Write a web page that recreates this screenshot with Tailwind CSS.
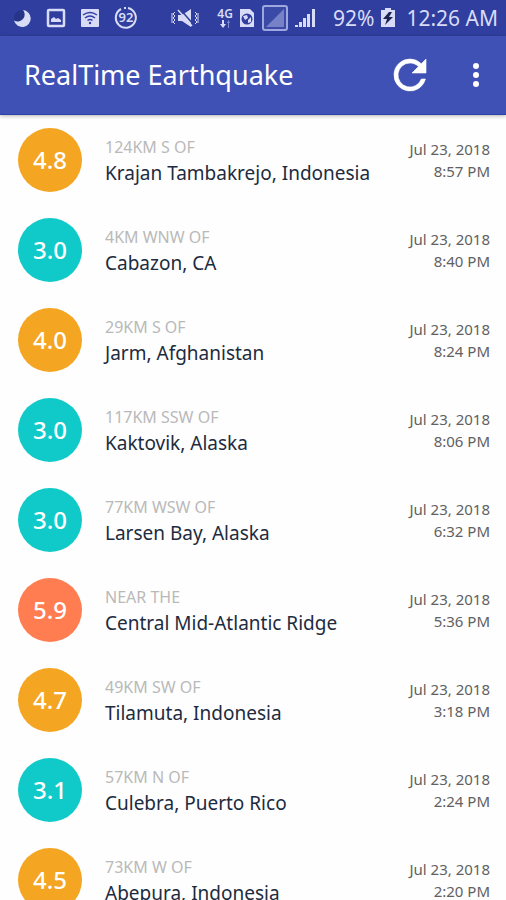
<!DOCTYPE html>
<html lang="en">
<head>
    <meta charset="UTF-8">
    <meta name="viewport" content="width=device-width, initial-scale=1.0">
    <title>RealTime Earthquake</title>
    <script src="https://cdn.jsdelivr.net/npm/@tailwindcss/browser@4"></script>
</head>
<body class="h-screen flex flex-col overflow-hidden bg-[#fefefe] font-['Noto_Sans','Open_Sans',sans-serif]">
    <!-- Status bar -->
    <div class="h-9 shrink-0 flex items-center justify-between bg-[#303f9f] pl-3 pr-2 text-[#d8dcf6]">
        <div class="flex items-center gap-3.5">
            <svg class="w-5 h-5" viewBox="0 0 20 20"><circle cx="10" cy="10" r="8" fill="#26348a"/><path d="M11 2a8.500 8.500 0 1 1-9 10.500A7 7 0 0 0 11 2z" fill="currentColor"/></svg>
            <svg class="w-5 h-5" viewBox="0 0 20 20"><rect x="2" y="2" width="16" height="16" rx="1" fill="none" stroke="currentColor" stroke-width="2.500"/><path d="M5 14v-3l3-2 2 2 2-1 3 2v2z" fill="currentColor"/></svg>
            <svg class="w-5 h-5" viewBox="0 0 20 20"><rect x="1" y="1" width="18" height="18" rx="1" fill="currentColor"/><g fill="none" stroke="#303f9f" stroke-width="1.500"><path d="M3 7q7-5 14 0M5 10q5-4 10 0M7.500 12.500q2.500-2 5 0"/></g><circle cx="10" cy="15" r="1.200" fill="#303f9f"/></svg>
            <div class="relative w-6 h-6 flex items-center justify-center text-[13px] font-semibold">
                <svg class="absolute inset-0 w-6 h-6" viewBox="0 0 24 24" fill="none" stroke="currentColor" stroke-width="2"><path d="M14 2a10 10 0 1 1-7 1M10 2h2"/></svg>
                92
            </div>
        </div>
        <div class="flex items-center gap-1.5">
            <svg class="w-7 h-5 mr-3" viewBox="0 0 28 20"><path d="M7 7h4l9-6v18l-9-6H7z" fill="currentColor"/><path d="M9 1l13 15" stroke="#303f9f" stroke-width="1.500"/><path d="M7 2l14 16" stroke="currentColor" stroke-width="1.500"/><path d="M4 4L2 6l2 2-2 2 2 2-2 2 2 2M1 5v10M24 4l2 2-2 2 2 2-2 2 2 2-2 2M27 5v10" fill="none" stroke="currentColor" stroke-width="1"/></svg>
            <div class="flex flex-col items-center text-xs leading-3 font-semibold">
                4G
                <svg class="w-3 h-2" viewBox="0 0 12 8"><path d="M3 0h2v4h2L4 8 1 4h2z" fill="currentColor"/><path d="M9 8V3H8l1.500-3L11 3h-1v5z" fill="#7f8bd0"/></svg>
            </div>
            <svg class="w-4 h-5" viewBox="0 0 16 20"><path d="M1 1h10l4 4v14H1z" fill="currentColor"/><circle cx="8" cy="11" r="5.500" fill="#303f9f"/><path d="M4 8l4-1 1 3-3 2zM9 12l3-3v5l-3 1z" fill="currentColor"/></svg>
            <svg class="w-7 h-7" viewBox="0 0 28 28"><rect x="2" y="2" width="24" height="24" rx="2" fill="#3b4aa6" stroke="#9fa8de" stroke-width="2"/><path d="M23 5v18H5z" fill="#7681c8"/></svg>
            <svg class="w-5 h-5" viewBox="0 0 20 20" fill="currentColor"><path d="M0 17h3v2H0zM4 14h3v5H4zM8 10h3v9H8zM12 6h3v13h-3zM17 1h3v18h-3z"/></svg>
            <span class="ml-3 text-[21px] leading-9">92%</span>
            <svg class="w-4 h-5" viewBox="0 0 16 20"><path d="M5 0h6v2h4v17H1V2h4z" fill="currentColor"/><path d="M9 4l-6 7h4l-2 6 8-8H9l3-5z" fill="#1c2450"/></svg>
            <span class="ml-1 text-[21px] leading-9">12:26 AM</span>
        </div>
    </div>

    <!-- App bar -->
    <header class="relative z-10 h-[79px] shrink-0 flex items-center bg-[#3f51b5] pl-6 pr-5 text-white border-b border-[#2c40a5] shadow-[0_1px_4px_rgba(0,0,0,0.3)]">
        <h1 class="flex-1 text-[27px] leading-8">RealTime Earthquake</h1>
        <button type="button" aria-label="Refresh" class="mr-8">
            <svg class="w-12 h-12" viewBox="0 0 24 24" fill="currentColor"><path d="M17.650 6.350A7.958 7.958 0 0 0 12 4a8 8 0 1 0 7.730 10h-2.080A6 6 0 1 1 12 6c1.660 0 3.140.69 4.220 1.780L13 11h7V4z" stroke="currentColor" stroke-width=".3"/></svg>
        </button>
        <button type="button" aria-label="More options">
            <svg class="w-5 h-6" viewBox="0 0 20 24" fill="currentColor"><circle cx="10" cy="3" r="3"/><circle cx="10" cy="12" r="3"/><circle cx="10" cy="21" r="3"/></svg>
        </button>
    </header>

    <!-- Earthquake list -->
    <ul class="flex-1 min-h-0 overflow-hidden">
        <li class="h-[90px] flex items-center pl-[18px] pr-4">
            <div class="w-16 h-16 shrink-0 rounded-full bg-[#f4a522] flex items-center justify-center text-2xl font-medium text-white">4.8</div>
            <div class="flex-1 pl-[23px] pt-0.5">
                <p class="text-base leading-6 text-[#b9b9b9]">124KM S OF</p>
                <p class="text-[19px] leading-7 text-[#1d2b3e]">Krajan Tambakrejo, Indonesia</p>
            </div>
            <div class="text-right text-[15px] leading-[22px] text-[#616161]">
                <p>Jul 23, 2018</p>
                <p>8:57 PM</p>
            </div>
        </li>
        <li class="h-[90px] flex items-center pl-[18px] pr-4">
            <div class="w-16 h-16 shrink-0 rounded-full bg-[#10cac9] flex items-center justify-center text-2xl font-medium text-white">3.0</div>
            <div class="flex-1 pl-[23px] pt-0.5">
                <p class="text-base leading-6 text-[#b9b9b9]">4KM WNW OF</p>
                <p class="text-[19px] leading-7 text-[#1d2b3e]">Cabazon, CA</p>
            </div>
            <div class="text-right text-[15px] leading-[22px] text-[#616161]">
                <p>Jul 23, 2018</p>
                <p>8:40 PM</p>
            </div>
        </li>
        <li class="h-[90px] flex items-center pl-[18px] pr-4">
            <div class="w-16 h-16 shrink-0 rounded-full bg-[#f4a522] flex items-center justify-center text-2xl font-medium text-white">4.0</div>
            <div class="flex-1 pl-[23px] pt-0.5">
                <p class="text-base leading-6 text-[#b9b9b9]">29KM S OF</p>
                <p class="text-[19px] leading-7 text-[#1d2b3e]">Jarm, Afghanistan</p>
            </div>
            <div class="text-right text-[15px] leading-[22px] text-[#616161]">
                <p>Jul 23, 2018</p>
                <p>8:24 PM</p>
            </div>
        </li>
        <li class="h-[90px] flex items-center pl-[18px] pr-4">
            <div class="w-16 h-16 shrink-0 rounded-full bg-[#10cac9] flex items-center justify-center text-2xl font-medium text-white">3.0</div>
            <div class="flex-1 pl-[23px] pt-0.5">
                <p class="text-base leading-6 text-[#b9b9b9]">117KM SSW OF</p>
                <p class="text-[19px] leading-7 text-[#1d2b3e]">Kaktovik, Alaska</p>
            </div>
            <div class="text-right text-[15px] leading-[22px] text-[#616161]">
                <p>Jul 23, 2018</p>
                <p>8:06 PM</p>
            </div>
        </li>
        <li class="h-[90px] flex items-center pl-[18px] pr-4">
            <div class="w-16 h-16 shrink-0 rounded-full bg-[#10cac9] flex items-center justify-center text-2xl font-medium text-white">3.0</div>
            <div class="flex-1 pl-[23px] pt-0.5">
                <p class="text-base leading-6 text-[#b9b9b9]">77KM WSW OF</p>
                <p class="text-[19px] leading-7 text-[#1d2b3e]">Larsen Bay, Alaska</p>
            </div>
            <div class="text-right text-[15px] leading-[22px] text-[#616161]">
                <p>Jul 23, 2018</p>
                <p>6:32 PM</p>
            </div>
        </li>
        <li class="h-[90px] flex items-center pl-[18px] pr-4">
            <div class="w-16 h-16 shrink-0 rounded-full bg-[#ff7d50] flex items-center justify-center text-2xl font-medium text-white">5.9</div>
            <div class="flex-1 pl-[23px] pt-0.5">
                <p class="text-base leading-6 text-[#b9b9b9]">NEAR THE</p>
                <p class="text-[19px] leading-7 text-[#1d2b3e]">Central Mid-Atlantic Ridge</p>
            </div>
            <div class="text-right text-[15px] leading-[22px] text-[#616161]">
                <p>Jul 23, 2018</p>
                <p>5:36 PM</p>
            </div>
        </li>
        <li class="h-[90px] flex items-center pl-[18px] pr-4">
            <div class="w-16 h-16 shrink-0 rounded-full bg-[#f4a522] flex items-center justify-center text-2xl font-medium text-white">4.7</div>
            <div class="flex-1 pl-[23px] pt-0.5">
                <p class="text-base leading-6 text-[#b9b9b9]">49KM SW OF</p>
                <p class="text-[19px] leading-7 text-[#1d2b3e]">Tilamuta, Indonesia</p>
            </div>
            <div class="text-right text-[15px] leading-[22px] text-[#616161]">
                <p>Jul 23, 2018</p>
                <p>3:18 PM</p>
            </div>
        </li>
        <li class="h-[90px] flex items-center pl-[18px] pr-4">
            <div class="w-16 h-16 shrink-0 rounded-full bg-[#10cac9] flex items-center justify-center text-2xl font-medium text-white">3.1</div>
            <div class="flex-1 pl-[23px] pt-0.5">
                <p class="text-base leading-6 text-[#b9b9b9]">57KM N OF</p>
                <p class="text-[19px] leading-7 text-[#1d2b3e]">Culebra, Puerto Rico</p>
            </div>
            <div class="text-right text-[15px] leading-[22px] text-[#616161]">
                <p>Jul 23, 2018</p>
                <p>2:24 PM</p>
            </div>
        </li>
        <li class="h-[90px] flex items-center pl-[18px] pr-4">
            <div class="w-16 h-16 shrink-0 rounded-full bg-[#f4a522] flex items-center justify-center text-2xl font-medium text-white">4.5</div>
            <div class="flex-1 pl-[23px] pt-0.5">
                <p class="text-base leading-6 text-[#b9b9b9]">73KM W OF</p>
                <p class="text-[19px] leading-7 text-[#1d2b3e]">Abepura, Indonesia</p>
            </div>
            <div class="text-right text-[15px] leading-[22px] text-[#616161]">
                <p>Jul 23, 2018</p>
                <p>2:20 PM</p>
            </div>
        </li>
    </ul>
</body>
</html>
